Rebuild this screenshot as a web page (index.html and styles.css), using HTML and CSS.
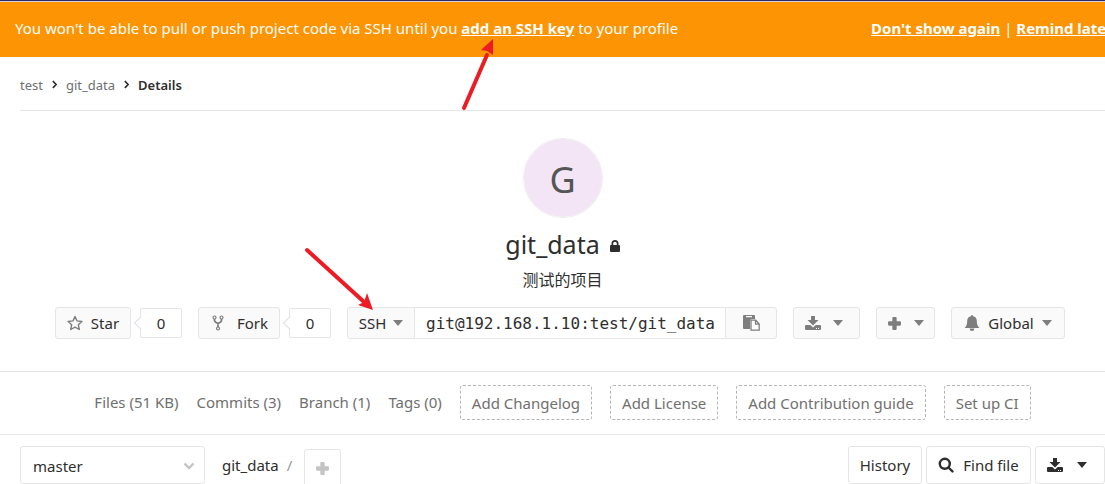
FILE: index.html
```html
<!DOCTYPE html>
<html lang="en">
<head>
    <meta charset="UTF-8">
    <meta name="viewport" content="width=device-width, initial-scale=1.0">
    <title>test / git_data</title>
    <link rel="stylesheet" href="styles.css">
</head>
<body>
    <!-- shared icons -->
    <svg class="sprite" aria-hidden="true">
        <symbol id="caret" viewBox="0 0 10 6"><path d="M0 0h10L5 6z"/></symbol>
        <symbol id="chevron" viewBox="0 0 6 10"><path d="M1 1l4 4-4 4" fill="none" stroke="currentColor" stroke-width="2"/></symbol>
        <symbol id="plus" viewBox="0 0 12 12"><path d="M5 0h2q1 0 1 1v3h3q1 0 1 1v2q0 1-1 1H8v3q0 1-1 1H5q-1 0-1-1V8H1q-1 0-1-1V5q0-1 1-1h3V1q0-1 1-1z"/></symbol>
        <symbol id="download" viewBox="0 0 16 16"><path d="M6 1h4v4h3.500L8 10.500 2.500 5H6z"/><path fill-rule="evenodd" d="M1 10h4.300L8 12.500l2.700-2.500H15q1 0 1 1v3q0 1-1 1H1q-1 0-1-1v-3q0-1 1-1zm10 3v1h1v-1zm2 0v1h1v-1z"/></symbol>
    </svg>

    <div class="navbar"></div>
    <div class="banner">
        <p>You won't be able to pull or push project code via SSH until you <a href="#">add an SSH key</a> to your profile</p>
        <p class="banner-links"><a href="#">Don't show again</a> | <a href="#">Remind later</a></p>
    </div>

    <nav class="breadcrumbs" aria-label="Breadcrumb">
        <a href="#">test</a>
        <svg><use href="#chevron"/></svg>
        <a href="#">git_data</a>
        <svg><use href="#chevron"/></svg>
        <strong>Details</strong>
    </nav>

    <header class="project-home">
        <div class="avatar">G</div>
        <h1>
            git_data
            <svg class="lock" viewBox="0 0 10 12"><path fill-rule="evenodd" d="M1.500 5V3.500a3.500 3.500 0 0 1 7 0V5H9q1 0 1 1v5q0 1-1 1H1q-1 0-1-1V6q0-1 1-1zM3.200 5h3.600V3.500a1.800 1.800 0 0 0-3.600 0z"/></svg>
        </h1>
        <p class="description" lang="zh">测试的项目</p>

        <div class="actions">
            <div class="count-group">
                <button class="btn star">
                    <svg class="icon" viewBox="0 0 16 16"><path d="M8 1.500l2 4.400 4.900.600-3.600 3.200 1 4.800L8 12.100l-4.300 2.400 1-4.800L1.100 6.500 6 5.900z" fill="none" stroke="currentColor" stroke-width="1.400" stroke-linejoin="round"/></svg>
                    Star
                </button>
                <a class="count" href="#">0</a>
            </div>
            <div class="count-group">
                <button class="btn fork">
                    <svg class="icon" viewBox="0 0 16 16"><g fill="none" stroke="currentColor" stroke-width="1.200"><circle cx="4.500" cy="2.500" r="1.500"/><circle cx="11.500" cy="2.500" r="1.500"/><circle cx="8" cy="13.500" r="1.500"/></g><path d="M4.500 4v1.200q0 1.300 1.200 2L8 8.500l2.300-1.300q1.200-.700 1.200-2V4M8 8v4" fill="none" stroke="currentColor" stroke-width="1.800"/></svg>
                    Fork
                </button>
                <a class="count" href="#">0</a>
            </div>
            <div class="clone">
                <button class="btn protocol">SSH <svg class="caret"><use href="#caret"/></svg></button>
                <input type="text" value="git@192.168.1.10:test/git_data" aria-label="Project clone URL" readonly>
                <button class="btn copy" aria-label="Copy URL to clipboard">
                    <svg class="clipboard" viewBox="0 0 17 16"><path fill-rule="evenodd" d="M1 0h10q1 0 1 1v3H9Q7 4 7 6v8H1q-1 0-1-1V1q0-1 1-1zm2 1v1.200h6V1z"/><path d="M8 5.200h4.700L16.200 9v6.200H8zM12.500 5.200v4h3.700" fill="#fff" stroke="currentColor" stroke-width="1.300"/></svg>
                </button>
            </div>
            <button class="btn download" aria-label="Download">
                <svg class="icon"><use href="#download"/></svg>
                <svg class="caret"><use href="#caret"/></svg>
            </button>
            <button class="btn create" aria-label="Create new">
                <svg class="plus"><use href="#plus"/></svg>
                <svg class="caret"><use href="#caret"/></svg>
            </button>
            <button class="btn notify">
                <svg class="icon" viewBox="0 0 16 16"><path d="M8 0q1 0 1 1.200 3.800.800 3.800 4.800 0 5 2.700 7H.500q2.700-2 2.700-7 0-4 3.800-4.800Q7 0 8 0zM5.500 13.400h5Q10.200 16 8 16t-2.500-2.600z"/></svg>
                Global
                <svg class="caret"><use href="#caret"/></svg>
            </button>
        </div>
    </header>

    <nav class="stats" aria-label="Project">
        <a href="#">Files (51 KB)</a>
        <a href="#">Commits (3)</a>
        <a href="#">Branch (1)</a>
        <a href="#">Tags (0)</a>
        <a class="missing" href="#">Add Changelog</a>
        <a class="missing" href="#">Add License</a>
        <a class="missing" href="#">Add Contribution guide</a>
        <a class="missing" href="#">Set up CI</a>
    </nav>

    <div class="tree-holder">
        <div class="branch">
            <select aria-label="Switch branch">
                <option>master</option>
            </select>
            <svg viewBox="0 0 12 8"><path d="M1.500 1.500L6 6l4.500-4.500" fill="none" stroke="currentColor" stroke-width="2.400"/></svg>
        </div>
        <a class="root" href="#">git_data</a>
        <span class="slash">/</span>
        <button class="add" aria-label="Add to tree"><svg class="plus"><use href="#plus"/></svg></button>
        <div class="tree-controls">
            <button class="history">History</button>
            <button class="find">
                <svg class="icon" viewBox="0 0 16 16"><g fill="none" stroke="currentColor" stroke-width="2.400"><circle cx="6.800" cy="6.800" r="5"/><path d="M10.500 10.500l4 4" stroke-linecap="round"/></g></svg>
                Find file
            </button>
            <button class="archive" aria-label="Download archive">
                <svg class="icon"><use href="#download"/></svg>
                <svg class="caret"><use href="#caret"/></svg>
            </button>
        </div>
    </div>

    <!-- hint arrows -->
    <svg class="arrow arrow-key" viewBox="0 0 34 74"><path d="M4 70L27 17" stroke="currentColor" stroke-width="4" stroke-linecap="round"/><path d="M33 1L21 12l6 1 6 4z"/></svg>
    <svg class="arrow arrow-ssh" viewBox="0 0 70 64"><path d="M3 3l56 51" stroke="currentColor" stroke-width="4" stroke-linecap="round"/><path d="M69 63L54 58l6-3 3-9z"/></svg>
</body>
</html>
```
FILE: styles.css
```css
* {
    box-sizing: border-box;
}

body {
    position: relative;
    margin: 0;
    overflow: hidden;
    background: #fff;
    color: #2e2e2e;
    font-family: "Noto Sans", "Noto Sans CJK SC", sans-serif;
    font-size: 15px;
    line-height: 20px;
}

p, h1 {
    margin: 0;
}

a {
    color: inherit;
    text-decoration: none;
}

svg {
    flex: none;
    fill: currentColor;
}

button, input, select {
    margin: 0;
    font: inherit;
    color: inherit;
}

button {
    display: flex;
    align-items: center;
    justify-content: center;
    padding: 0;
    background: #fff;
    border: 1px solid #e5e5e5;
    border-radius: 3px;
    white-space: nowrap;
    cursor: pointer;
}

.sprite {
    display: none;
}

.icon {
    width: 16px;
    height: 16px;
}

.caret {
    width: 10px;
    height: 6px;
}

.plus {
    width: 13px;
    height: 13px;
}

.navbar {
    height: 2px;
    background: #292961;
    border-bottom: 1px solid #d9cfe0;
}

.banner {
    display: flex;
    justify-content: space-between;
    height: 55px;
    padding: 16px 0 0 15px;
    background: #fc9403;
    color: #fff;
    white-space: nowrap;
}

.banner a {
    font-weight: 700;
    text-decoration: underline;
}

.banner-links {
    margin-right: -8px;
}

.breadcrumbs {
    display: flex;
    align-items: center;
    gap: 9px;
    height: 54px;
    margin-left: 20px;
    padding-top: 2px;
    border-bottom: 1px solid #e5e5e5;
    font-size: 13px;
}

.breadcrumbs a {
    color: #707070;
}

.breadcrumbs strong {
    font-weight: 600;
}

.breadcrumbs svg {
    width: 5px;
    height: 9px;
}

.project-home {
    display: flex;
    flex-direction: column;
    align-items: center;
    padding: 27px 0 32px 20px;
}

.avatar {
    width: 80px;
    height: 80px;
    border: 1px solid #eee;
    border-radius: 50%;
    background: #f3e5f5;
    background-clip: padding-box;
    color: #555;
    font-size: 36px;
    line-height: 82px;
    text-align: center;
}

.project-home h1 {
    display: flex;
    align-items: center;
    gap: 10px;
    margin-top: 9px;
    font-size: 25px;
    font-weight: 400;
    line-height: 34px;
}

.lock {
    width: 10px;
    height: 12px;
    margin-top: 4px;
}

.description {
    margin-top: 9px;
    font-size: 16px;
}

.actions {
    display: flex;
    gap: 16px;
    margin-top: 17px;
    padding-right: 5px;
}

.btn {
    height: 32px;
    background: #fafafa;
}

.btn svg {
    color: #7e7e7e;
}

.count-group {
    display: flex;
    align-items: center;
    gap: 9px;
}

.count {
    position: relative;
    width: 42px;
    height: 30px;
    border: 1px solid #e5e5e5;
    border-radius: 2px;
    line-height: 28px;
    text-align: center;
}

/* little pointer towards the button */
.count::before {
    content: "";
    position: absolute;
    top: 9px;
    left: -5px;
    width: 9px;
    height: 9px;
    border: solid #dce0e5;
    border-width: 0 0 1px 1px;
    background: #fff;
    transform: rotate(45deg);
}

.star {
    gap: 8px;
    width: 76px;
}

.fork {
    gap: 11px;
    width: 82px;
}

.clone {
    display: flex;
}

.protocol {
    gap: 7px;
    width: 68px;
    border-radius: 3px 0 0 3px;
}

.clone input {
    width: 310px;
    height: 32px;
    padding: 0 10px 0 11px;
    border: 1px solid #e5e5e5;
    border-width: 1px 0;
    font-family: "DejaVu Sans Mono", monospace;
    font-size: 16px;
}

.copy {
    width: 52px;
    border-radius: 0 3px 3px 0;
}

.clipboard {
    width: 17px;
    height: 16px;
}

.download {
    gap: 12px;
    width: 67px;
    padding-right: 6px;
}

.create {
    gap: 13px;
    width: 59px;
}

.notify {
    gap: 8px;
    width: 114px;
}

.stats {
    display: flex;
    justify-content: center;
    align-items: center;
    gap: 18px;
    height: 64px;
    padding: 0 0 2px 20px;
    border: solid #e5e5e5;
    border-width: 1px 0;
    color: #707070;
    white-space: nowrap;
}

.missing {
    padding: 7px 11px 6px;
    border: 1px dashed #b5b5b5;
    border-radius: 3px;
}

.tree-holder {
    display: flex;
    align-items: center;
    padding: 11px 0 0 20px;
}

.branch {
    position: relative;
    width: 185px;
}

.branch select {
    display: block;
    width: 100%;
    height: 38px;
    padding: 2px 12px 0;
    appearance: none;
    border: 1px solid #e5e5e5;
    border-radius: 3px;
    background: #fff;
}

.branch svg {
    position: absolute;
    top: 16px;
    right: 10px;
    width: 12px;
    height: 8px;
    color: #c4c4c4;
    pointer-events: none;
}

.root {
    margin-left: 17px;
}

.slash {
    margin: 0 12px 0 8px;
    color: #999;
}

.add {
    align-self: flex-start;
    width: 37px;
    height: 38px;
    margin: 3px 0 -3px;
    color: #c4c4c4;
}

.tree-controls {
    display: flex;
    gap: 4px;
    margin-left: auto;
}

.tree-controls button {
    height: 38px;
}

.history {
    width: 74px;
}

.find {
    gap: 9px;
    width: 105px;
}

.archive {
    gap: 14px;
    width: 70px;
    padding-right: 6px;
}

.arrow {
    position: absolute;
    color: #ed1c24;
    pointer-events: none;
}

.arrow-key {
    top: 38px;
    left: 460px;
    width: 34px;
    height: 74px;
}

.arrow-ssh {
    top: 247px;
    left: 304px;
    width: 70px;
    height: 64px;
}
```
